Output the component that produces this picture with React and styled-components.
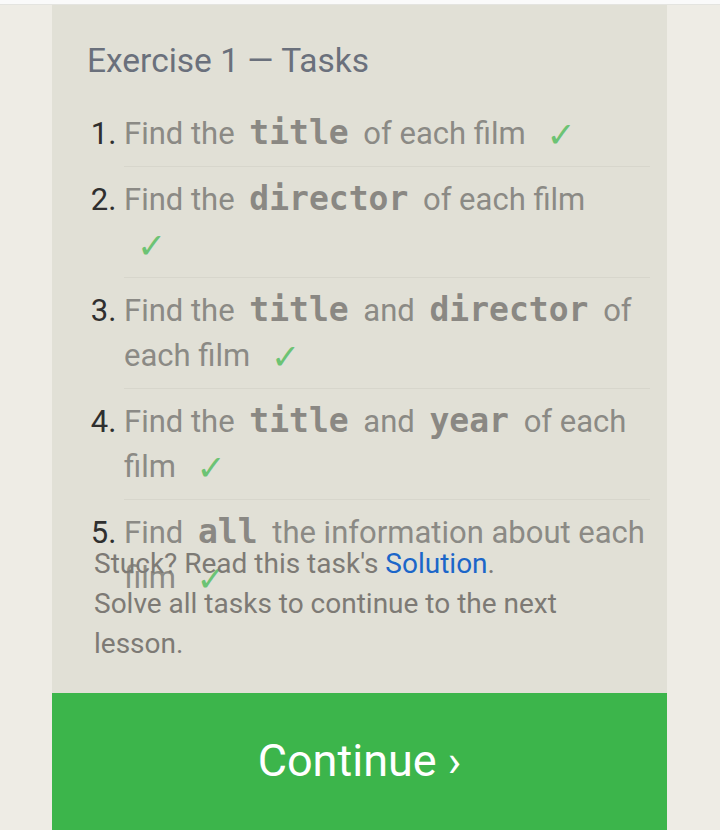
import React from "react";
import styled, { createGlobalStyle } from "styled-components";

const Global = createGlobalStyle`
  html, body { margin: 0; padding: 0; }
  body {
    background: #eeece5;
    font-family: Roboto, "Liberation Sans", sans-serif;
    overflow: hidden;
  }
`;

const TopStrip = styled.div`
  height: 4px;
  background: #fafafa;
  border-bottom: 1px solid #e4e4e0;
`;

const Page = styled.div`
  display: flex;
  padding-left: 52px;
`;

const Panel = styled.div`
  width: 615px;
  background: #e1e0d6;
  display: flex;
  flex-direction: column;
`;

const Heading = styled.h2`
  margin: 0;
  padding: 36px 0 0 35px;
  font-weight: 400;
  font-size: 33.5px;
  line-height: 40px;
  color: #6a707c;
`;

const TaskArea = styled.div`
  height: 443px;
  margin-top: 20px;
  padding: 0 17px 0 72px;
`;

const TaskList = styled.ol`
  margin: 0;
  padding: 0;
`;

const Task = styled.li`
  font-size: 31px;
  line-height: 45px;
  color: #8b8a85;
  padding: 10px 0;
  border-bottom: ${(p) => (p.$last ? "none" : "1px solid #d7d6cc")};
  &::marker {
    color: #2f2f2f;
  }
`;

const Code = styled.code`
  font-family: "DejaVu Sans Mono", "Liberation Mono", monospace;
  font-weight: 700;
  font-size: 33px;
  line-height: 40px;
  color: #8a8883;
  padding: 0 7px;
`;

const Check = styled.span`
  display: inline-block;
  font-family: "DejaVu Sans", sans-serif;
  color: #6cc374;
  font-size: 35px;
  line-height: 1;
  margin-left: 13px;
  padding-right: 22px;
  vertical-align: -3px;
`;

const Note = styled.p`
  margin: 0;
  padding: 0 40px 0 42px;
  font-size: 28px;
  line-height: 40px;
  color: #7d7a75;
`;

const Link = styled.a`
  color: #1b66c9;
  text-decoration: none;
`;

const ContinueButton = styled.button`
  margin-top: 29px;
  height: 140px;
  border: none;
  background: #3cb54b;
  color: #ffffff;
  font-family: Roboto, "Liberation Sans", sans-serif;
  font-size: 45px;
  padding: 0 0 6px;
  cursor: pointer;
`;

const tasks = [
  ["Find the ", ["title"], " of each film"],
  ["Find the ", ["director"], " of each film"],
  ["Find the ", ["title"], " and ", ["director"], " of each film"],
  ["Find the ", ["title"], " and ", ["year"], " of each film"],
  ["Find ", ["all"], " the information about each film"],
];

export default function App() {
  return (
    <>
      <Global />
      <TopStrip />
      <Page>
        <Panel>
          <Heading>Exercise 1 — Tasks</Heading>
          <TaskArea>
            <TaskList>
              {tasks.map((parts, i) => (
                <Task key={i} $last={i === tasks.length - 1}>
                  {parts.map((p, j) =>
                    Array.isArray(p) ? <Code key={j}>{p[0]}</Code> : <React.Fragment key={j}>{p}</React.Fragment>
                  )}{" "}
                  <Check>✓</Check>
                </Task>
              ))}
            </TaskList>
          </TaskArea>
          <Note>
            Stuck? Read this task's <Link href="#">Solution</Link>.
          </Note>
          <Note>Solve all tasks to continue to the next lesson.</Note>
          <ContinueButton>Continue ›</ContinueButton>
        </Panel>
      </Page>
    </>
  );
}
